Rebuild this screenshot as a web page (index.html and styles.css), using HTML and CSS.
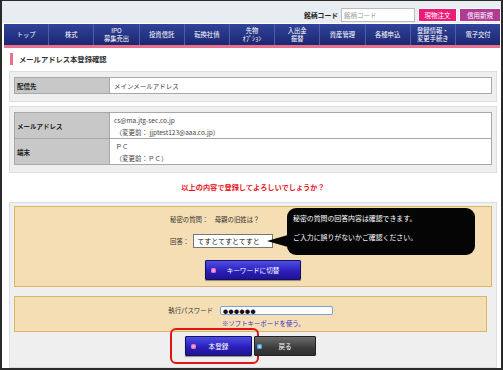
FILE: index.html
```html
<!DOCTYPE html>
<html lang="ja">

<head>
    <meta charset="UTF-8">
    <meta name="viewport" content="width=device-width, initial-scale=1.0">
    <title>メールアドレス本登録確認</title>
    <link rel="stylesheet" href="styles.css">
</head>

<body>
<div class="frame">
    <div class="top">
        <span class="code-label">銘柄コード</span>
        <input type="text" class="code-input" placeholder="銘柄コード" />
        <span class="top-btn genbutsu">現物注文</span>
        <span class="top-btn shinyo">信用新規</span>
    </div>
    <ul class="gnav">
        <li>トップ</li>
        <li>株式</li>
        <li>IPO<br>募集売出</li>
        <li>投資信託</li>
        <li>転換社債</li>
        <li>先物<br>ｵﾌﾟｼｮﾝ</li>
        <li>入出金<br>振替</li>
        <li>資産管理</li>
        <li>各種申込</li>
        <li>登録情報・<br>変更手続き</li>
        <li>電子交付</li>
    </ul>

    <div class="main">
        <h2 class="ttl">メールアドレス本登録確認</h2>

        <div class="panel">
            <table class="tbl">
                <tr>
                    <th>配信先</th>
                    <td>メインメールアドレス</td>
                </tr>
            </table>
        </div>

        <div class="panel">
            <table class="tbl">
                <tr class="tall">
                    <th>メールアドレス</th>
                    <td>cs@ma.jtg-sec.co.jp<br>&nbsp;（変更前：&nbsp;jjptest123@aaa.co.jp）</td>
                </tr>
                <tr class="tall">
                    <th>端末</th>
                    <td>&nbsp;ＰＣ<br>&nbsp;（変更前：ＰＣ）</td>
                </tr>
            </table>
        </div>

        <p class="ask">以上の内容で登録してよろしいでしょうか？</p>

        <div class="panel form-panel">
            <div class="box box-q">
                <div class="q-row">秘密の質問：　母親の旧姓は？</div>
                <div class="a-row">
                    <span>回答：</span>
                    <span class="answer">てすとてすとてすと</span>
                </div>
                <div class="center">
                    <span class="btn btn-blue wide"><i class="dot"></i>キーワードに切替</span>
                </div>
                <div class="tip">
                    <p>秘密の質問の回答内容は確認できます。</p>
                    <p>ご入力に誤りがないかご確認ください。</p>
                </div>
            </div>

            <div class="box box-pw">
                <span class="pw-label">執行パスワード</span>
                <span class="pw-input">●●●●●●</span>
                <span></span>
                <span class="soft">※ソフトキーボードを使う。</span>
            </div>

            <div class="actions">
                <span class="mark">
                    <span class="btn btn-blue"><i class="dot"></i>本登録</span>
                </span>
                <span class="btn btn-gray"><i class="dot dot-blue"></i>戻る</span>
            </div>
        </div>
    </div>
</div>
</body>

</html>
```

FILE: styles.css
```css
* {
    box-sizing: border-box;
}

body,
html {
    margin: 0;
    padding: 0;
    font-family: "Noto Sans CJK JP", "DejaVu Sans", sans-serif;
    color: #333;
}

.frame {
    width: 503px;
    height: 370px;
    border: 2px solid #2a2a2a;
    border-top-width: 1px;
    background-color: #fff;
    overflow: hidden;
}

/* header */
.top {
    height: 22px;
    background-color: #e8edf1;
    display: flex;
    justify-content: flex-end;
    align-items: flex-end;
    padding: 0 0 1px;
}

.code-label {
    font-size: 6.8px;
    font-weight: bold;
    color: #222;
    line-height: 14px;
    margin-right: 3px;
}

.code-input {
    width: 74px;
    height: 14px;
    border: 1px solid #bbb;
    padding: 0 2px;
    font-family: inherit;
    font-size: 6.5px;
    margin: 0 3px 0 0;
}

.code-input::placeholder {
    color: #999;
}

.top-btn {
    height: 14px;
    line-height: 13px;
    color: #fff;
    font-size: 6.5px;
    text-align: center;
    border: 1px solid #fff;
    border-radius: 1px;
}

.genbutsu {
    width: 39px;
    background-color: #ec1a78;
    margin-right: 2px;
}

.shinyo {
    width: 42px;
    background-color: #b03a94;
}

/* global nav */
.gnav {
    list-style: none;
    margin: 1px 1px 0 2px;
    padding: 0;
    display: flex;
    background: linear-gradient(#30449a, #1c2672);
    border-bottom: 3px solid #e8708a;
    height: 24px;
}

.gnav li {
    flex: 1;
    display: flex;
    align-items: center;
    justify-content: center;
    text-align: center;
    color: #fff;
    font-size: 6.3px;
    line-height: 8px;
    border-left: 1px solid #4d5ea8;
}

.gnav li:first-child {
    border-left: 0;
}

/* main */
.main {
    padding: 0 4px 0 7px;
}

.ttl {
    margin: 5px 0 6px 1px;
    height: 12px;
    border-left: 3px solid #ee6f8a;
    padding-left: 6px;
    font-size: 7.3px;
    line-height: 12px;
    color: #333;
}

.panel {
    background-color: #efefef;
    border: 1px solid #dedede;
    padding: 5px 4px 7px;
    margin-bottom: 4px;
}

.tbl {
    width: 100%;
    border-collapse: collapse;
    font-size: 6.5px;
}

.tbl th,
.tbl td {
    border: 1px solid #a8a8a8;
    text-align: left;
    height: 16px;
    line-height: 12px;
}

.tbl th {
    width: 95px;
    background-color: #c8c8c8;
    padding: 0 2px;
    color: #222;
}

.tbl td {
    background-color: #fff;
    padding: 0 4px;
    color: #444;
    text-decoration: none;
}

.tbl .tall th,
.tbl .tall td {
    height: 26px;
}

.ask {
    margin: 0;
    height: 25px;
    line-height: 21px;
    text-align: center;
    color: #e8141c;
    font-weight: bold;
    font-size: 7.2px;
}

.form-panel {
    padding: 3px 4px 10px;
    margin-bottom: 0;
}

.box {
    background-color: #f5deb3;
    border: 1px solid #d8b66a;
    font-size: 6.4px;
    color: #333;
}

.box-q {
    position: relative;
    padding: 7px 0 7px 155px;
    height: 81px;
}

.q-row {
    line-height: 11px;
    margin-bottom: 9px;
}

.a-row {
    display: flex;
    align-items: center;
    gap: 4px;
    margin-bottom: 12px;
}

.answer {
    width: 80px;
    height: 14px;
    line-height: 12px;
    background-color: #fff;
    border: 1px solid #777;
    padding: 0 3px;
    font-size: 7px;
    color: #111;
}

.center {
    display: flex;
    justify-content: center;
    margin-left: -155px;
}

.tip {
    position: absolute;
    left: 272px;
    top: 1px;
    width: 188px;
    height: 47px;
    background-color: #050505;
    border-radius: 9px;
    padding: 1px 6px 0;
    color: #fff;
    font-size: 6.9px;
    line-height: 19px;
}

.tip p {
    margin: 0;
}

.tip::before {
    content: "";
    position: absolute;
    left: -20px;
    top: 27px;
    border-right: 21px solid #050505;
    border-top: 6px solid transparent;
    border-bottom: 6px solid transparent;
}

.box-pw {
    margin: 9px 5px 0 0;
    height: 36px;
    padding: 8px 0 0;
    display: grid;
    grid-template-columns: 205px 1fr;
    align-items: center;
}

.pw-label {
    text-align: right;
    padding-right: 7px;
    line-height: 9px;
}

.pw-input {
    width: 113px;
    height: 9px;
    background-color: #fff;
    border: 1px solid #7d9fd6;
    border-radius: 2px;
    font-size: 5px;
    line-height: 7px;
    padding-left: 2px;
    letter-spacing: 0.5px;
    color: #111;
}

.soft {
    color: #3b2fc4;
    line-height: 12px;
    padding-left: 2px;
}

/* buttons */
.actions {
    display: flex;
    justify-content: center;
    align-items: center;
    gap: 6px;
    margin: 3px 0 0 -20px;
}

.mark {
    display: flex;
    padding: 6px 5px 6px 13px;
    border: 2px solid #e01616;
    border-radius: 6px;
    margin: -7px -11px -7px 0;
}

.btn {
    position: relative;
    display: flex;
    align-items: center;
    justify-content: center;
    width: 67px;
    height: 20px;
    color: #fff;
    font-size: 6.6px;
    border-radius: 1px;
}

.btn-blue {
    background: linear-gradient(#4c4ee6, #2a1cb8 60%, #1f1590);
    border: 1px solid #13125e;
    box-shadow: 0 1px 1px rgba(0, 0, 0, .4);
}

.btn-gray {
    width: 62px;
    background: linear-gradient(#6c6c6c, #3c3c3c 60%, #2e2e2e);
    border: 1px solid #222;
}

.wide {
    width: 96px;
}

.dot {
    position: absolute;
    left: 5px;
    top: 7px;
    width: 5px;
    height: 5px;
    border-radius: 50%;
    background-color: #f7b4dd;
    box-shadow: 0 0 1px 1px #e860b0 inset;
}

.dot-blue {
    left: 2px;
    background-color: #bfe6ff;
    box-shadow: 0 0 1px 1px #2d9ef0 inset;
}
```
